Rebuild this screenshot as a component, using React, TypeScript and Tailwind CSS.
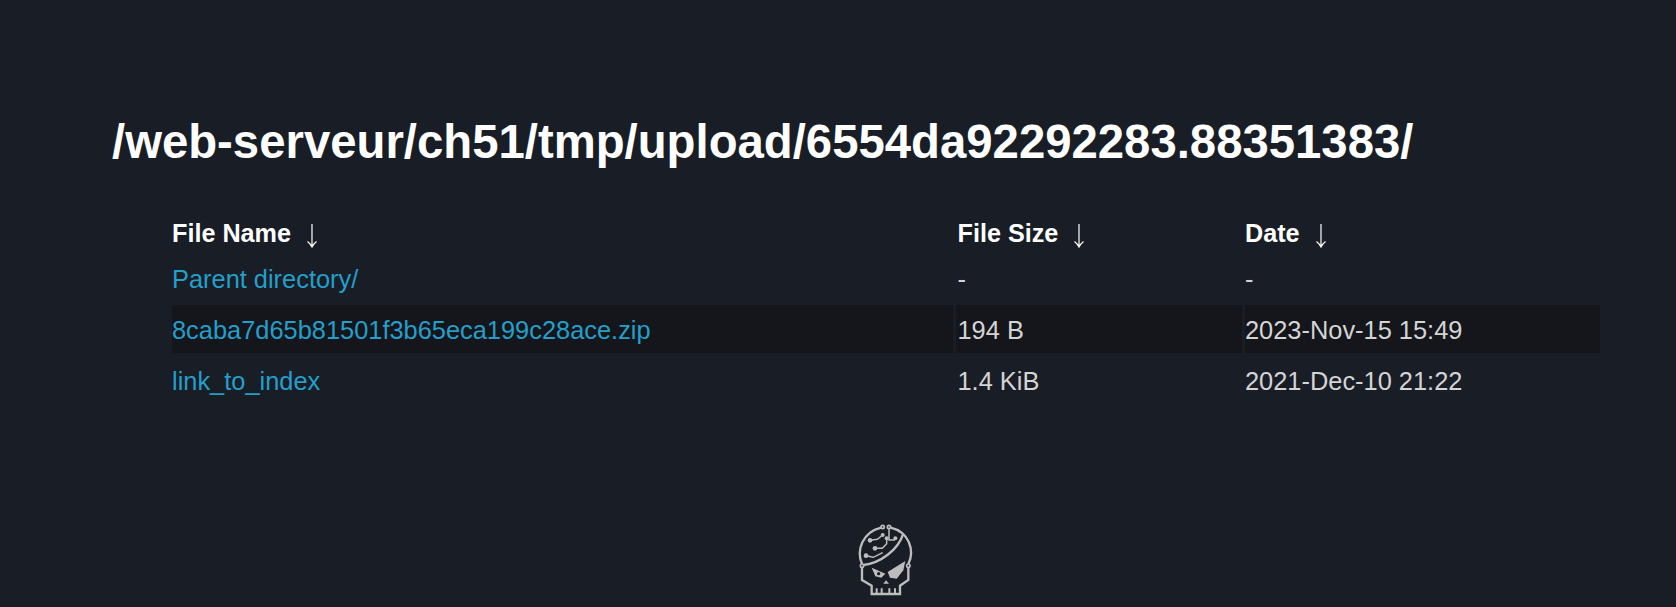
const rows = [
  { name: 'Parent directory/', size: '-', date: '-' },
  { name: '8caba7d65b81501f3b65eca199c28ace.zip', size: '194 B', date: '2023-Nov-15 15:49' },
  { name: 'link_to_index', size: '1.4 KiB', date: '2021-Dec-10 21:22' },
]

const headers = ['File Name', 'File Size', 'Date']

function SortArrow() {
  return (
    <svg className="inline-block ml-[15px] w-[12px] h-[24px] align-[-6px]" viewBox="0 0 12 24" fill="none" stroke="#ffffff" strokeWidth="1.2">
      <path d="M6 0V23M1.5 17.5C3.5 19 5 21 6 23C7 21 8.500 19 10.500 17.500" />
    </svg>
  )
}

function Logo() {
  return (
    <svg className="w-[100px] h-[92px]" viewBox="0 0 300 276" fill="none" stroke="#bdbdbd" strokeWidth="7">
      {/* cranium */}
      <path d="M66 147C48 105 68 52 123 38M152 38C205 50 226 105 205 147" />
      <path d="M70 150C120 145 175 105 190 55" />
      <circle cx="128" cy="36" r="5" strokeWidth="5" />
      <circle cx="147" cy="36" r="5" strokeWidth="5" />
      {/* circuit traces */}
      <path d="M90 76L112 73L128 60M105 100H127L140 86V72M78 122L100 127L128 113M147 42V75H165" strokeWidth="4.500" />
      <circle cx="90" cy="76" r="7" fill="#bdbdbd" stroke="none" />
      <circle cx="128" cy="60" r="6" fill="#bdbdbd" stroke="none" />
      <circle cx="105" cy="100" r="7" fill="#bdbdbd" stroke="none" />
      <circle cx="140" cy="70" r="6" fill="#bdbdbd" stroke="none" />
      <circle cx="78" cy="122" r="7" fill="#bdbdbd" stroke="none" />
      <circle cx="166" cy="70" r="6" fill="#bdbdbd" stroke="none" />
      {/* jaw */}
      <path d="M66 157V195L95 212V237H180V212L205 195V157" />
      <circle cx="66" cy="152" r="5" strokeWidth="5" />
      <circle cx="205" cy="152" r="5" strokeWidth="5" />
      <path d="M110 220V237M125 220V237M148 220V237M165 220V237" strokeWidth="6" />
      {/* eyes and nose */}
      <path d="M95 158L136 176L124 188L106 184Z" fill="#bdbdbd" stroke="none" />
      <circle cx="116" cy="176" r="5" fill="#191d26" stroke="none" />
      <path d="M143 171L196 138L190 166L170 191L150 188Z" fill="#bdbdbd" stroke="none" />
      <path d="M130 206L138 196L147 206Z" fill="#bdbdbd" stroke="none" />
    </svg>
  )
}

export default function App() {
  return (
    <div className="min-h-[607px] bg-[#191d26] font-['Liberation_Sans',Arial,sans-serif] overflow-hidden">
      <div className="pt-[108px] pl-[112px]">
        <h1 className="text-[47.3px] leading-[68px] font-bold text-white whitespace-nowrap">
          /web-serveur/ch51/tmp/upload/6554da92292283.88351383/
        </h1>
      </div>

      <div className="mt-[26px] pl-[169px] pr-[73px]">
        <table className="w-full table-fixed border-separate border-spacing-[3px] text-[25.4px]">
          <thead>
            <tr>
              {headers.map((h, i) => (
                <th
                  key={h}
                  className={`text-left text-[25.2px] leading-[26px] font-bold text-white h-[46px] pt-[12px] ${i === 1 ? 'px-[1.5px] w-[286px]' : i === 0 ? 'px-0 w-[781px]' : 'px-0'}`}
                >
                  {h}
                  <SortArrow />
                </th>
              ))}
            </tr>
          </thead>
          <tbody>
            {rows.map((row, i) => (
              <tr key={row.name} className={i === 1 ? 'bg-[#14161b]' : ''}>
                <td className="h-[48px] pt-[3px] px-0 text-[#249fca]">{row.name}</td>
                <td className="h-[48px] pt-[3px] px-[1.5px] text-[#d4d4d4]">{row.size}</td>
                <td className="h-[48px] pt-[3px] px-0 text-[#d4d4d4]">{row.date}</td>
              </tr>
            ))}
          </tbody>
        </table>
      </div>

      <div className="mt-[108px] ml-[840px]">
        <Logo />
      </div>
    </div>
  )
}
